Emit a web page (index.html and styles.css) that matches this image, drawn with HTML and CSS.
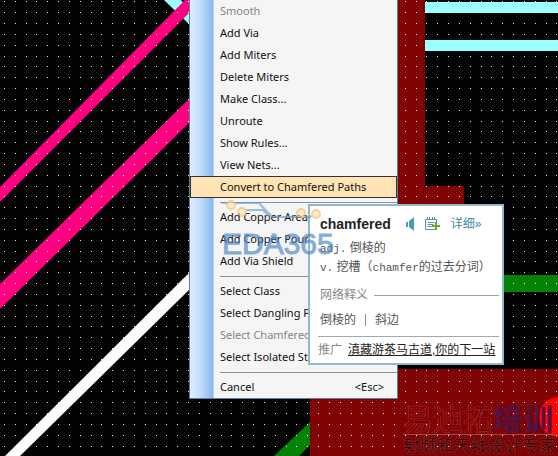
FILE: index.html
```html
<!DOCTYPE html>
<html lang="en">
<head>
<meta charset="utf-8">
<title>Board editor</title>
<link rel="stylesheet" href="styles.css">
</head>
<body>
<main class="board">
  <svg class="board-art" aria-hidden="true">
    <defs>
      <pattern id="grid" width="65" height="65" patternUnits="userSpaceOnUse" shape-rendering="crispEdges">
        <path stroke="#fff" stroke-width="1" stroke-dasharray="1 10 1 10 1 9 1 10 1 10 1 10" d="M4 1.500h61M4 12.500h61M4 23.500h61M4 34.500h61M4 45.500h61M4 56.500h61"/>
      </pattern>
      <pattern id="grain" width="4" height="4" patternUnits="userSpaceOnUse" shape-rendering="crispEdges">
        <path fill="#fff" d="M0 0h1v1H0zM2 2h1v1H2z"/>
      </pattern>
    </defs>
    <rect width="100%" height="100%" fill="#000"/>
    <path fill="#7e0000" d="M397 0h28v186h39v20h-67zM310 369h400v300H310z"/>
    <path fill="#008200" d="M500 275h400v17H500zM310 422v23l-11 11h-25z"/>
    <circle cx="559" cy="417" r="20" fill="#f00"/>
    <rect class="grain" width="100%" height="100%" fill="url(#grain)"/>
    <path fill="#9ff" d="M425 2h400v11H425zM425 40h400v11H425zM164 0h17l10 12v14z"/>
    <path fill="#ff0080" d="M0 187L185 0h7v10L0 202zM0 284L190 98v24L0 309z"/>
    <rect class="grid-dots" width="100%" height="100%" fill="url(#grid)"/>
    <path fill="#fcfcfc" d="M190 272v17L20 456H5z"/>
  </svg>

  <div class="stamp">
    <p class="stamp-name">易迪拓<b>培训</b></p>
    <p class="stamp-line">射频和天线设计专家</p>
  </div>

  <ul class="menu">
    <li><button class="item" disabled>Smooth</button></li>
    <li><button class="item">Add Via</button></li>
    <li><button class="item">Add Miters</button></li>
    <li><button class="item">Delete Miters</button></li>
    <li><button class="item">Make Class...</button></li>
    <li><button class="item">Unroute</button></li>
    <li><button class="item">Show Rules...</button></li>
    <li><button class="item">View Nets...</button></li>
    <li><button class="item active">Convert to Chamfered Paths</button></li>
    <li class="separator"></li>
    <li><button class="item">Add Copper Area</button></li>
    <li><button class="item">Add Copper Pour</button></li>
    <li><button class="item">Add Via Shield</button></li>
    <li class="separator"></li>
    <li><button class="item">Select Class</button></li>
    <li><button class="item">Select Dangling P</button></li>
    <li><button class="item" disabled>Select Chamfered</button></li>
    <li><button class="item">Select Isolated St</button></li>
    <li class="separator"></li>
    <li><button class="item">Cancel<span>&lt;Esc&gt;</span></button></li>
  </ul>

  <section class="popup">
    <header class="popup-head">
      <h1>chamfered</h1>
      <button class="icon" aria-label="Pronounce">
        <svg width="9" height="14" viewBox="0 0 9 14"><path fill="#4b9cba" d="M0 5h2v5H0zM3 4l5-4v14l-5-4z"/></svg>
      </button>
      <button class="icon" aria-label="Add to word book">
        <svg width="16" height="14" viewBox="0 0 16 14"><path fill="none" stroke="#5a93a5" d="M.5 2.500h11v10H.5zM2.500 5.500h7M2.500 7.500h6M2.500 9.500h5"/><path stroke="#5a93a5" d="M2.500 0v3M4.500 0v3M7.500 0v3M9.500 0v3"/><path stroke="#7f9f20" stroke-width="2" d="M11 5v8M7 9h8"/></svg>
      </button>
      <a href="#more">详细»</a>
    </header>
    <p class="sense"><span>adj.</span> 倒棱的</p>
    <p class="sense"><span>v.</span> 挖槽（<span>chamfer</span>的过去分词）</p>
    <h2>网络释义</h2>
    <p class="web">倒棱的<i></i>斜边</p>
    <p class="promo">推广<a href="#promo">滇藏游茶马古道,你的下一站</a></p>
  </section>

  <div class="logo">
    <svg width="112" height="28" viewBox="0 0 112 28" aria-hidden="true">
      <path fill="none" stroke="#6b9bcf" stroke-width="2" d="M0 7h37l13 14h38l6-5M20 14h21l7 7"/>
      <g fill="#fde3b4" stroke="#f3bd62" stroke-width="2"><circle cx="9" cy="9" r="4"/><circle cx="20" cy="16" r="4"/><circle cx="79" cy="17" r="4"/><circle cx="94" cy="18" r="4"/></g>
    </svg>
    <span>EDA365</span>
  </div>
</main>
</body>
</html>
```
FILE: styles.css
```css
* { box-sizing: border-box; }
body, p, h1, h2, ul { margin: 0; padding: 0; }
body { background: #000; }
button { font: inherit; color: inherit; background: none; border: 0; padding: 0; }

.board {
  position: relative;
  min-height: 100vh;
  overflow: hidden;
  font-family: "Noto Sans", "Noto Sans CJK SC", sans-serif;
}
.board-art { position: absolute; inset: 0; width: 100%; height: 100%; }
.grid-dots { opacity: 0.9; }
.grain { opacity: 0.08; }

.menu {
  position: absolute;
  top: 0;
  left: 189px;
  width: 209px;
  list-style: none;
  border: 1px solid #5d7fa5;
  border-top: 0;
  background: linear-gradient(90deg, #deecfc, #c4defb 10px, #86b8ee 23px, #e8f0f8 24px, #f5f5f5 25px);
  font-size: 11px;
  color: #111;
}
.item {
  display: flex;
  justify-content: space-between;
  align-items: center;
  width: 100%;
  height: 22px;
  padding: 0 13px 2px 30px;
  white-space: nowrap;
}
.item:disabled { color: #858585; }
.item.active { background: #fee3b4; border: 1px solid #333; padding-left: 29px; }
.separator { height: 8px; padding: 4px 0 0 30px; }
.separator::after { content: ""; display: block; height: 1px; background: #8693a2; }

.popup {
  position: absolute;
  left: 308px;
  top: 204px;
  width: 196px;
  padding: 9px 3px 4px 10px;
  border: 2px solid #90bac7;
  background: #fff;
  color: #555;
  font-family: "Liberation Sans", "Noto Sans CJK SC", sans-serif;
  font-size: 12px;
  line-height: 18px;
  white-space: nowrap;
}
.popup-head { display: flex; align-items: center; height: 18px; margin-bottom: 6px; }
.popup h1 { font-size: 14px; color: #222; margin-right: 15px; }
.icon { display: flex; margin-right: 10px; }
.popup-head a { color: #4489a2; text-decoration: none; }
.sense span { font-family: "Liberation Mono", monospace; font-size: 11px; }
.sense { line-height: 18px; }
.popup h2 {
  display: flex;
  align-items: center;
  gap: 6px;
  margin-top: 9px;
  font-size: 12px;
  font-weight: 400;
  color: #888;
}
.popup h2::after { content: ""; flex: 1; height: 1px; background: #8facb5; }
.web { margin-top: 7px; }
.web i { display: inline-block; width: 1px; height: 12px; margin: 0 9px; background: #6ea1ad; vertical-align: -2px; }
.promo { margin: 7px 0 0 -2px; padding-top: 4px; border-top: 1px solid #9babb3; color: #888; }
.promo a { margin-left: 6px; color: #222; }

.logo {
  position: absolute;
  left: 222px;
  top: 196px;
  display: flex;
  flex-direction: column;
  opacity: 0.65;
  pointer-events: none;
}
.logo span { margin-top: 3px; font: 30px/34px "Liberation Sans", sans-serif; color: #4a84c4; -webkit-text-stroke: 1px #4a84c4; }

.stamp {
  position: absolute;
  left: 403px;
  top: 401px;
  white-space: nowrap;
  font-family: "Noto Sans CJK SC", sans-serif;
}
.stamp-name { font-size: 30px; line-height: 33px; color: #7e0000; border-bottom: 1px solid #9a5050; text-shadow: 0 0 1px #d08080; }
.stamp-name b { color: #4d1548; text-shadow: none; }
.stamp-line { font-size: 17px; line-height: 20px; color: #300; text-shadow: 0 0 1px #c07070; }
```
